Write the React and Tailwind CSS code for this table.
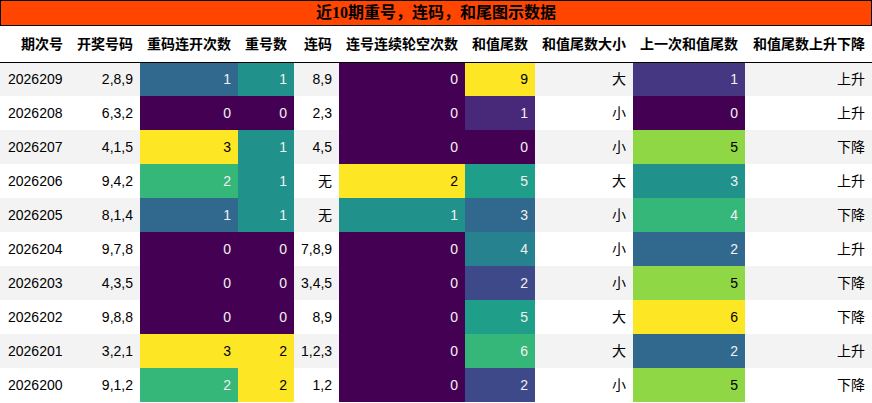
const V = {
  v0: "bg-[#440154] text-[#f1f1f1]",
  v11: "bg-[#482878] text-[#f1f1f1]",
  v17: "bg-[#453781] text-[#f1f1f1]",
  v22: "bg-[#3e4989] text-[#f1f1f1]",
  v33: "bg-[#31688e] text-[#f1f1f1]",
  v44: "bg-[#26828e] text-[#f1f1f1]",
  v50: "bg-[#21918c] text-[#f1f1f1]",
  v56: "bg-[#1f9e89] text-[#f1f1f1]",
  v67: "bg-[#35b779] text-[#f1f1f1]",
  v83: "bg-[#8fd744] text-black",
  v100: "bg-[#fde725] text-black",
};

// colour keys per value, one map for each gradient column
const streak = { 0: V.v0, 1: V.v33, 2: V.v67, 3: V.v100 };
const repeat = { 0: V.v0, 1: V.v50, 2: V.v100 };
const gap = { 0: V.v0, 1: V.v50, 2: V.v100 };
const tail = { 0: V.v0, 1: V.v11, 2: V.v22, 3: V.v33, 4: V.v44, 5: V.v56, 6: V.v67, 9: V.v100 };
const prevTail = { 0: V.v0, 1: V.v17, 2: V.v33, 3: V.v50, 4: V.v67, 5: V.v83, 6: V.v100 };

const rows = [
  ["2026209", "2,8,9", 1, 1, "8,9", 0, 9, "大", 1, "上升"],
  ["2026208", "6,3,2", 0, 0, "2,3", 0, 1, "小", 0, "上升"],
  ["2026207", "4,1,5", 3, 1, "4,5", 0, 0, "小", 5, "下降"],
  ["2026206", "9,4,2", 2, 1, "无", 2, 5, "大", 3, "上升"],
  ["2026205", "8,1,4", 1, 1, "无", 1, 3, "小", 4, "下降"],
  ["2026204", "9,7,8", 0, 0, "7,8,9", 0, 4, "小", 2, "上升"],
  ["2026203", "4,3,5", 0, 0, "3,4,5", 0, 2, "小", 5, "下降"],
  ["2026202", "9,8,8", 0, 0, "8,9", 0, 5, "大", 6, "下降"],
  ["2026201", "3,2,1", 3, 2, "1,2,3", 0, 6, "大", 2, "上升"],
  ["2026200", "9,1,2", 2, 2, "1,2", 0, 2, "小", 5, "下降"],
];

const headers = [
  "期次号",
  "开奖号码",
  "重码连开次数",
  "重号数",
  "连码",
  "连号连续轮空次数",
  "和值尾数",
  "和值尾数大小",
  "上一次和值尾数",
  "和值尾数上升下降",
];

const widths = [70, 70, 98, 56, 45, 126, 70, 98, 112, 127];

export default function App() {
  return (
    <div className="w-[872px] h-[403px] bg-white font-['Liberation_Sans','Noto_Sans_CJK_SC',sans-serif] text-[14px] text-black">
      <div className="h-[26px] border border-black bg-[#ff4500] flex items-center justify-center font-['Liberation_Serif','Noto_Sans_CJK_SC',serif] text-[16px] font-bold leading-none">
        近10期重号，连码，和尾图示数据
      </div>
      <table className="w-[872px] table-fixed border-collapse">
        <colgroup>
          {widths.map((w, i) => (
            <col key={i} style={{ width: w }} />
          ))}
        </colgroup>
        <thead>
          <tr className="h-[36px] border-b border-black">
            {headers.map((h) => (
              <th key={h} className="px-[7px] text-right font-bold font-['Noto_Sans_CJK_SC',sans-serif] whitespace-nowrap">
                {h}
              </th>
            ))}
          </tr>
        </thead>
        <tbody>
          {rows.map((r, i) => (
            <tr key={r[0]} className={`h-[34px] ${i % 2 === 0 ? "bg-[#f3f3f3]" : "bg-white"}`}>
              <td className="pl-[8px] text-left">{r[0]}</td>
              <td className="px-[7px] text-right">{r[1]}</td>
              <td className={`px-[7px] text-right ${streak[r[2]]}`}>{r[2]}</td>
              <td className={`px-[7px] text-right ${repeat[r[3]]}`}>{r[3]}</td>
              <td className="px-[7px] text-right whitespace-nowrap">{r[4]}</td>
              <td className={`px-[7px] text-right ${gap[r[5]]}`}>{r[5]}</td>
              <td className={`px-[7px] text-right ${tail[r[6]]}`}>{r[6]}</td>
              <td className="px-[7px] text-right">{r[7]}</td>
              <td className={`px-[7px] text-right ${prevTail[r[8]]}`}>{r[8]}</td>
              <td className="px-[7px] text-right">{r[9]}</td>
            </tr>
          ))}
        </tbody>
      </table>
    </div>
  );
}
